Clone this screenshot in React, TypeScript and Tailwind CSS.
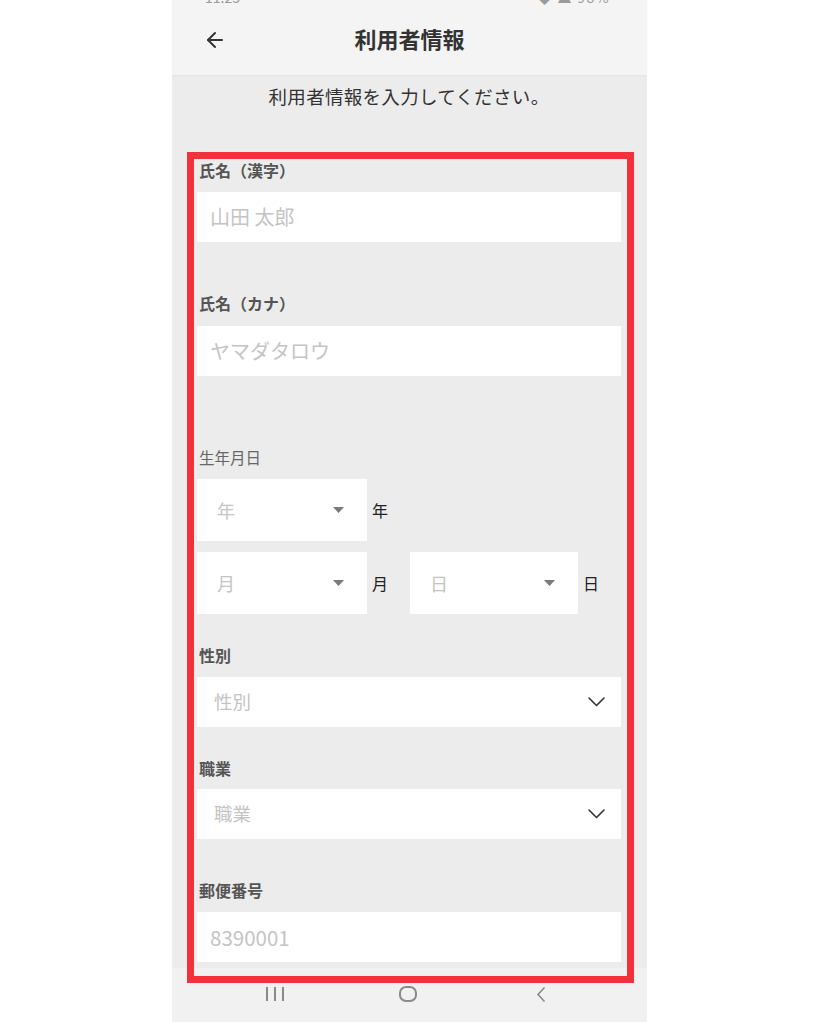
import React from "react";
import { ArrowLeft } from "lucide-react";

const font = { fontFamily: '"Noto Sans CJK JP", "Noto Sans", sans-serif' };

function Caret() {
  return (
    <svg width="11" height="6" viewBox="0 0 11 6" className="shrink-0">
      <polygon points="0,0 11,0 5.5,6" fill="#7a7a7a" />
    </svg>
  );
}

function Chevron() {
  return (
    <svg width="17" height="10" viewBox="0 0 17 10" className="shrink-0">
      <polyline points="1,1 8.5,8.5 16,1" fill="none" stroke="#333" strokeWidth="1.6" strokeLinecap="round" strokeLinejoin="round" />
    </svg>
  );
}

function SmallSelect({ text, w }: { text: string; w: string }) {
  return (
    <div className={`${w} h-[62px] bg-white flex items-center justify-between pl-[20px] pr-[23px]`}>
      <span className="text-[18px] text-[#c4c4c4]">{text}</span>
      <Caret />
    </div>
  );
}

export default function App() {
  return (
    <div className="w-full bg-white" style={font}>
      <div className="relative mx-auto w-[475px] h-[1022px] bg-[#ececec] flex flex-col">
        {/* header */}
        <div className="h-[75px] bg-[#f4f4f4] flex flex-col shadow-[0_1px_2px_rgba(0,0,0,0.04)]">
          <div className="h-[6px] overflow-hidden relative">
            <div className="absolute left-[33px] top-[-13px] text-[14px] text-[#9a9a9a]">11:23</div>
            <div className="absolute right-[37px] top-[-13px] text-[14px] text-[#9a9a9a] tracking-widest">◆ ▲ 98%</div>
          </div>
          <div className="relative h-[69px] flex items-center justify-center">
            <ArrowLeft className="absolute left-[31px] top-[22px]" size={24} color="#333" strokeWidth={2} />
            <span className="text-[22px] font-bold text-[#333] -mt-[4px]">利用者情報</span>
          </div>
        </div>

        {/* content */}
        <div className="flex-1 flex flex-col pl-[25px] pr-[26px]">
          <p className="mt-[9px] h-[24px] leading-[24px] text-center text-[18.5px] text-[#333] tracking-[0.3px]">
            利用者情報を入力してください。
          </p>

          <div className="mt-[52px] h-[20px] leading-[20px] text-[16px] font-bold text-[#555] pl-[2px]">氏名（漢字）</div>
          <div className="mt-[12px] h-[50px] bg-white flex items-center pl-[13px]">
            <span className="text-[20px] text-[#c4c4c4]">山田 太郎</span>
          </div>

          <div className="mt-[51px] h-[20px] leading-[20px] text-[16px] font-bold text-[#555] pl-[2px]">氏名（カナ）</div>
          <div className="mt-[13px] h-[50px] bg-white flex items-center pl-[13px]">
            <span className="text-[20px] text-[#c4c4c4]">ヤマダタロウ</span>
          </div>

          <div className="mt-[71px] h-[20px] leading-[20px] text-[15.5px] text-[#666] pl-[2px]">生年月日</div>
          <div className="mt-[12px] flex items-center">
            <SmallSelect text="年" w="w-[170px]" />
            <span className="ml-[5px] text-[16px] text-[#222]">年</span>
          </div>
          <div className="mt-[11px] flex items-center">
            <SmallSelect text="月" w="w-[170px]" />
            <span className="ml-[5px] text-[16px] text-[#222]">月</span>
            <div className="ml-[22px]">
              <SmallSelect text="日" w="w-[168px]" />
            </div>
            <span className="ml-[5px] text-[16px] text-[#222]">日</span>
          </div>

          <div className="mt-[31px] h-[20px] leading-[20px] text-[16px] font-bold text-[#555] pl-[2px]">性別</div>
          <div className="mt-[12px] h-[50px] bg-white flex items-center justify-between pl-[17px] pr-[16px]">
            <span className="text-[18.5px] text-[#c4c4c4]">性別</span>
            <Chevron />
          </div>

          <div className="mt-[31px] h-[20px] leading-[20px] text-[16px] font-bold text-[#555] pl-[2px]">職業</div>
          <div className="mt-[11px] h-[50px] bg-white flex items-center justify-between pl-[17px] pr-[16px]">
            <span className="text-[18.5px] text-[#c4c4c4]">職業</span>
            <Chevron />
          </div>

          <div className="mt-[41px] h-[20px] leading-[20px] text-[16px] font-bold text-[#555] pl-[2px]">郵便番号</div>
          <div className="mt-[12px] h-[50px] bg-white flex items-center pl-[13px]">
            <span className="text-[20.5px] text-[#c4c4c4]">8390001</span>
          </div>
        </div>

        {/* nav bar */}
        <div className="h-[54px] bg-[#f1f1f1] flex items-center justify-center pr-[7px] pb-[2px]">
          <div className="flex gap-[6px] items-center">
            <div className="w-[2px] h-[14px] bg-[#8a8a8a]" />
            <div className="w-[2px] h-[14px] bg-[#8a8a8a]" />
            <div className="w-[2px] h-[14px] bg-[#8a8a8a]" />
          </div>
          <div className="ml-[115px] w-[18px] h-[16px] border-2 border-[#8a8a8a] rounded-[7px]" />
          <svg className="ml-[119px]" width="10" height="17" viewBox="0 0 10 17">
            <polyline points="8.5,1.5 2,8.5 8.5,15.5" fill="none" stroke="#8a8a8a" strokeWidth="1.6" />
          </svg>
        </div>

        {/* red annotation box */}
        <div className="absolute left-[15px] top-[152px] w-[447px] h-[831px] border-[7px] border-[#f2323a] pointer-events-none" />
      </div>
    </div>
  );
}
